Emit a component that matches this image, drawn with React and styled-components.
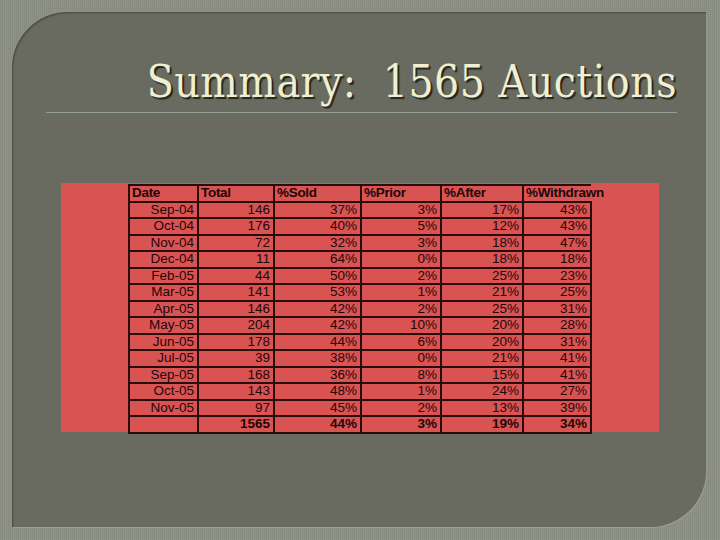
import React from "react";
import styled, { createGlobalStyle } from "styled-components";

const Global = createGlobalStyle`
  html, body { margin: 0; padding: 0; }
  body {
    width: 720px;
    height: 540px;
    overflow: hidden;
    background-color: #8c9082;
    background-image:
      repeating-linear-gradient(0deg, rgba(255,255,255,0.05) 0 1px, transparent 1px 2px),
      repeating-linear-gradient(90deg, rgba(0,0,0,0.05) 0 1px, transparent 1px 2px);
  }
`;

const Slide = styled.div`
  box-sizing: border-box;
  margin: 12px 0 0 12px;
  width: 694px;
  height: 515px;
  background: #6a6b60;
  border-radius: 56px 0 56px 0;
  box-shadow: inset 1px 1px 2px rgba(0, 0, 0, 0.35), 1px 1px 0 rgba(255, 255, 255, 0.12);
  display: flex;
  flex-direction: column;
`;

const Header = styled.div`
  padding: 0 29px 0 34px;
  display: flex;
  flex-direction: column;
`;

const Title = styled.h1`
  margin: 0;
  height: 92px;
  display: flex;
  align-items: flex-end;
  justify-content: flex-end;
  font-family: "DejaVu Serif Condensed", "DejaVu Serif", serif;
  font-weight: normal;
  font-size: 44px;
  line-height: 1;
  white-space: pre;
  color: #efefd2;
  text-shadow: 2px 2px 1px #25251f;
  letter-spacing: 0.5px;
`;

const Rule = styled.div`
  margin-top: 8px;
  height: 1px;
  background: #93a28e;
`;

const Body = styled.div`
  padding: 70px 0 0 49px;
`;

const RedBox = styled.div`
  width: 598px;
  height: 249px;
  background: #da5353;
  box-sizing: border-box;
  padding: 1px 0 0 67px;
`;

const Table = styled.table`
  border-collapse: collapse;
  table-layout: fixed;
  width: 462px;
  font-family: "Liberation Sans", Arial, sans-serif;
  font-size: 13.5px;
  color: #1d0707;
`;

const Col = styled.col`
  width: ${(p) => p.$w}px;
`;

const Cell = styled.td`
  height: 14.5px;
  padding: 0 3px 0 2px;
  line-height: 14px;
  text-align: ${(p) => (p.$head ? "left" : "right")};
  font-weight: ${(p) => (p.$bold ? "bold" : "normal")};
  border-top: 2px solid #2a0c0c;
  border-bottom: 2px solid #2a0c0c;
  border-left: ${(p) => p.$lw || 2}px solid #2a0c0c;
  border-right: ${(p) => (p.$noRight ? "none" : `${p.$rw || 2}px solid #2a0c0c`)};
  white-space: nowrap;
  overflow: ${(p) => (p.$overflow ? "visible" : "hidden")};
  letter-spacing: ${(p) => (p.$head ? "-0.3px" : "0")};
`;

const cols = [69, 76, 87, 80, 82, 68];
const lws = [2, 2, 1.5, 1, 1, 2];

const rows = [
  ["Sep-04", "146", "37%", "3%", "17%", "43%"],
  ["Oct-04", "176", "40%", "5%", "12%", "43%"],
  ["Nov-04", "72", "32%", "3%", "18%", "47%"],
  ["Dec-04", "11", "64%", "0%", "18%", "18%"],
  ["Feb-05", "44", "50%", "2%", "25%", "23%"],
  ["Mar-05", "141", "53%", "1%", "21%", "25%"],
  ["Apr-05", "146", "42%", "2%", "25%", "31%"],
  ["May-05", "204", "42%", "10%", "20%", "28%"],
  ["Jun-05", "178", "44%", "6%", "20%", "31%"],
  ["Jul-05", "39", "38%", "0%", "21%", "41%"],
  ["Sep-05", "168", "36%", "8%", "15%", "41%"],
  ["Oct-05", "143", "48%", "1%", "24%", "27%"],
  ["Nov-05", "97", "45%", "2%", "13%", "39%"],
];
const total = ["", "1565", "44%", "3%", "19%", "34%"];
const heads = ["Date", "Total", "%Sold", "%Prior", "%After", "%Withdrawn"];

export default function App() {
  return (
    <>
      <Global />
      <Slide>
        <Header>
          <Title>{"Summary:  1565 Auctions"}</Title>
          <Rule />
        </Header>
        <Body>
          <RedBox>
            <Table>
              <colgroup>
                {cols.map((w, i) => (
                  <Col key={i} $w={w} />
                ))}
              </colgroup>
              <tbody>
                <tr>
                  {heads.map((h, i) => (
                    <Cell
                      key={i}
                      $head
                      $bold
                      $lw={lws[i]}
                      $noRight={i === 5}
                      $overflow={i === 5}
                    >
                      {h}
                    </Cell>
                  ))}
                </tr>
                {rows.map((r, ri) => (
                  <tr key={ri}>
                    {r.map((v, i) => (
                      <Cell key={i} $lw={lws[i]}>
                        {v}
                      </Cell>
                    ))}
                  </tr>
                ))}
                <tr>
                  {total.map((v, i) => (
                    <Cell key={i} $bold $lw={lws[i]}>
                      {v}
                    </Cell>
                  ))}
                </tr>
              </tbody>
            </Table>
          </RedBox>
        </Body>
      </Slide>
    </>
  );
}
